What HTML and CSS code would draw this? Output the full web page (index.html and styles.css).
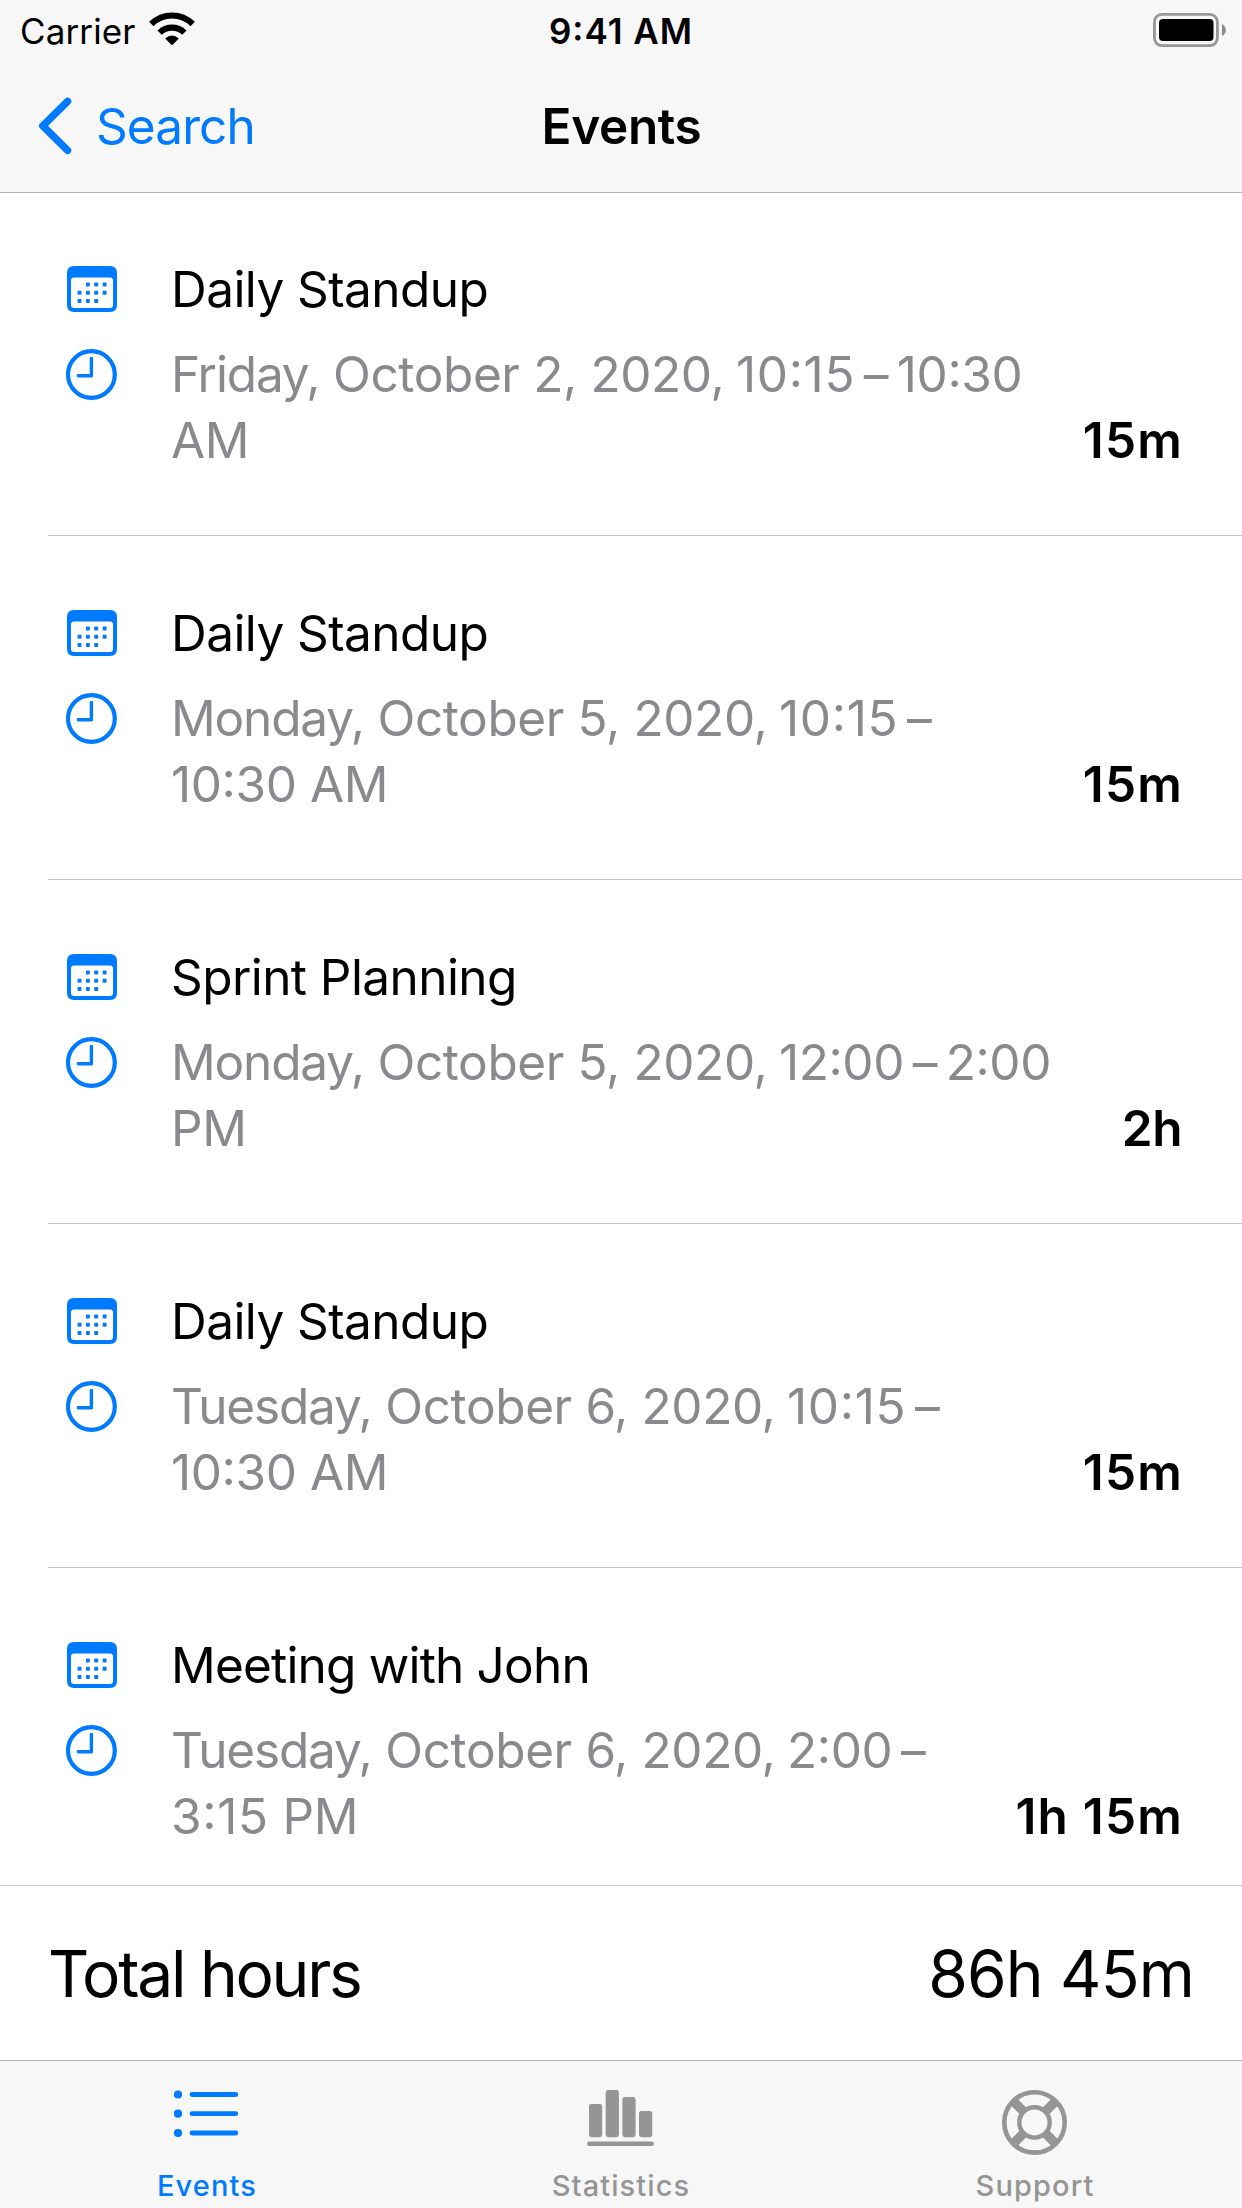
FILE: index.html
```html
<!DOCTYPE html>
<html lang="en">
<head>
<meta charset="utf-8">
<title>Events</title>
<link rel="stylesheet" href="styles.css">
</head>
<body>
<svg class="sprite" aria-hidden="true">
  <symbol id="calendar" viewBox="0 0 50 46">
    <path fill="currentColor" fill-rule="evenodd" d="M7 0H43Q50 0 50 7V39Q50 46 43 46H7Q0 46 0 39V7Q0 0 7 0ZM7 11.5Q4 11.5 4 14.5V39Q4 42 7 42H43Q46 42 46 39V14.5Q46 11.5 43 11.5Z"/>
    <g fill="currentColor">
      <rect x="18.9" y="16.6" width="4" height="4" rx="1"/><rect x="27.2" y="16.6" width="4" height="4" rx="1"/><rect x="35.6" y="16.6" width="4" height="4" rx="1"/>
      <rect x="10.5" y="24.8" width="4" height="4" rx="1"/><rect x="18.9" y="24.8" width="4" height="4" rx="1"/><rect x="27.2" y="24.8" width="4" height="4" rx="1"/><rect x="35.6" y="24.8" width="4" height="4" rx="1"/>
      <rect x="10.5" y="33" width="4" height="4" rx="1"/><rect x="18.9" y="33" width="4" height="4" rx="1"/><rect x="27.2" y="33" width="4" height="4" rx="1"/>
    </g>
  </symbol>
  <symbol id="clock" viewBox="0 0 52 52">
    <g fill="none" stroke="currentColor">
      <circle cx="26.4" cy="26.5" r="23.4" stroke-width="4.2"/>
      <path d="M13.3 27.7H26.4V10.5" stroke-width="3.4" stroke-linecap="round" stroke-linejoin="round"/>
    </g>
  </symbol>
</svg>
<div class="screen">
  <header class="header">
    <div class="status">
      <div class="carrier">Carrier
        <svg class="wifi" viewBox="0 0 46 34">
          <g fill="none" stroke="#000" stroke-width="6.2">
            <path d="M2.3 12A29.5 29.5 0 0 1 43.7 12"/>
            <path d="M10.6 20.6A17.8 17.8 0 0 1 35.4 20.6"/>
          </g>
          <path d="M16.2 26.6Q23 20.4 29.8 26.6L24 32.5Q23 33.4 22 32.5Z"/>
        </svg>
      </div>
      <div class="clock-time">9:41 AM</div>
      <svg class="battery" viewBox="0 0 74 34">
        <rect x="1.4" y="1.4" width="63" height="31.2" rx="7.5" fill="none" stroke="#979797" stroke-width="2.8"/>
        <rect x="6" y="6" width="54.5" height="22" rx="4" fill="#000"/>
        <path d="M69 11Q72.8 13 72.8 17T69 23Z" fill="#8b8b8b"/>
      </svg>
    </div>
    <nav class="nav">
      <a class="back">
        <svg class="chevron" viewBox="0 0 34 58"><path d="M29.6 4.3 4.8 28.8 29.6 53.3" fill="none" stroke="currentColor" stroke-width="7.4" stroke-linecap="round" stroke-linejoin="round"/></svg>
        <span>Search</span>
      </a>
      <h1 class="title">Events</h1>
    </nav>
  </header>
  <main class="list">
    <article class="event">
      <svg class="icon cal"><use href="#calendar"/></svg>
      <h2 class="name">Daily Standup</h2>
      <svg class="icon clk"><use href="#clock"/></svg>
      <div class="when"><span class="day">Friday,</span> October 2, 2020, <span class="time quarter">10:15</span>&thinsp;<span class="dash">–</span>&thinsp;10:30<br>AM</div>
      <div class="duration">15m</div>
    </article>
    <article class="event">
      <svg class="icon cal"><use href="#calendar"/></svg>
      <h2 class="name">Daily Standup</h2>
      <svg class="icon clk"><use href="#clock"/></svg>
      <div class="when"><span class="day">Monday,</span> October 5, 2020, <span class="time quarter">10:15</span>&thinsp;<span class="dash">–</span><br>10:30 AM</div>
      <div class="duration">15m</div>
    </article>
    <article class="event">
      <svg class="icon cal"><use href="#calendar"/></svg>
      <h2 class="name">Sprint Planning</h2>
      <svg class="icon clk"><use href="#clock"/></svg>
      <div class="when"><span class="day">Monday,</span> October 5, 2020, <span class="time">12:00</span>&thinsp;<span class="dash">–</span>&thinsp;2:00<br>PM</div>
      <div class="duration hours">2h</div>
    </article>
    <article class="event">
      <svg class="icon cal"><use href="#calendar"/></svg>
      <h2 class="name">Daily Standup</h2>
      <svg class="icon clk"><use href="#clock"/></svg>
      <div class="when"><span class="day">Tuesday,</span> October 6, 2020, <span class="time quarter">10:15</span>&thinsp;<span class="dash">–</span><br>10:30 AM</div>
      <div class="duration">15m</div>
    </article>
    <article class="event">
      <svg class="icon cal"><use href="#calendar"/></svg>
      <h2 class="name long">Meeting with John</h2>
      <svg class="icon clk"><use href="#clock"/></svg>
      <div class="when"><span class="day">Tuesday,</span> October 6, 2020, <span class="time">2:00</span>&thinsp;<span class="dash">–</span><br><span class="quarter">3:15</span> PM</div>
      <div class="duration">1h 15m</div>
    </article>
  </main>
  <section class="total">
    <span class="total-label">Total hours</span>
    <span class="total-value">86h 45m</span>
  </section>
  <footer class="tabs">
    <a class="tab active">
      <svg class="tab-icon" viewBox="0 0 70 66">
        <g fill="currentColor">
          <circle cx="6" cy="5.5" r="4.1"/><circle cx="6" cy="24.7" r="4.1"/><circle cx="6" cy="44" r="4.1"/>
          <rect x="17.6" y="3.1" width="48.6" height="4.8" rx="2.4"/><rect x="17.6" y="22.3" width="48.6" height="4.8" rx="2.4"/><rect x="17.6" y="41.6" width="48.6" height="4.8" rx="2.4"/>
        </g>
      </svg>
      <span>Events</span>
    </a>
    <a class="tab">
      <svg class="tab-icon" viewBox="0 0 70 66">
        <g fill="currentColor">
          <rect x="3" y="15" width="13.2" height="33.2" rx="2.4"/><rect x="19.7" y="1" width="13.2" height="47.2" rx="2.4"/><rect x="36.4" y="8" width="13.2" height="40.2" rx="2.4"/><rect x="53" y="22" width="13.2" height="26.2" rx="2.4"/>
          <rect x="1" y="52.6" width="67" height="4.4" rx="2.2"/>
        </g>
      </svg>
      <span>Statistics</span>
    </a>
    <a class="tab">
      <svg class="tab-icon" viewBox="0 0 70 66">
        <g fill="none" stroke="currentColor">
          <circle cx="34.5" cy="33.4" r="30.2" stroke-width="4.6"/>
          <circle cx="34.5" cy="33.4" r="15.2" stroke-width="4.4"/>
          <path d="M14 12.9 23.4 22.3M55 12.9 45.6 22.3M14 53.9 23.4 44.5M55 53.9 45.6 44.5" stroke-width="9.4"/>
        </g>
      </svg>
      <span>Support</span>
    </a>
  </footer>
</div>
</body>
</html>
```
FILE: styles.css
```css
* { box-sizing: border-box; }
body {
  margin: 0;
  background: #fff;
  color: #000;
  font-family: Inter, "Liberation Sans", sans-serif;
  font-feature-settings: "calt" 1;
}
h1, h2 { margin: 0; font: inherit; }
svg { display: block; }
.sprite { display: none; }
.screen {
  width: 1242px;
  height: 2208px;
  display: flex;
  flex-direction: column;
  overflow: hidden;
}

/* status and navigation bars */
.header {
  height: 193px;
  flex: none;
  background: #f7f7f7;
  border-bottom: 1px solid #b2b2b2;
}
.status {
  height: 60px;
  display: grid;
  grid-template-columns: 1fr auto 1fr;
  align-items: center;
  padding: 2px 20px 0;
  font-size: 35px;
  line-height: 58px;
}
.carrier { display: flex; align-items: center; gap: 13px; letter-spacing: .13px; }
.wifi { width: 46px; height: 34px; margin-top: -4px; fill: #000; }
.clock-time { font-weight: 600; letter-spacing: 1px; }
.battery { width: 74px; height: 34px; margin: -2px -5px 0 0; justify-self: end; }
.nav {
  height: 132px;
  display: grid;
  grid-template-columns: 1fr auto 1fr;
  align-items: center;
  padding: 0 37px 0 38px;
  font-size: 49.5px;
  line-height: 66px;
}
.back { display: flex; align-items: center; gap: 24px; color: #007aff; letter-spacing: -.9px; }
.chevron { width: 34px; height: 58px; }
.title { font-weight: 600; letter-spacing: -.36px; }

/* event rows */
.list { flex: 1; min-height: 0; overflow: hidden; }
.event {
  height: 344px;
  display: grid;
  grid-template-columns: 104px 1fr auto;
  grid-template-rows: 66px 132px;
  row-gap: 19px;
  margin-left: 48px;
  padding: 64px 59px 0 19px;
  border-bottom: 1px solid #c6c6c8;
  font-size: 49.5px;
  line-height: 66px;
  white-space: nowrap;
}
.event:first-child { height: 343px; padding-top: 63px; }
.event:last-child { border-bottom: 0; }
.icon { color: #007aff; }
.cal { width: 50px; height: 46px; margin-top: 10px; }
.clk { width: 52px; height: 52px; margin: 7px 0 0 -2px; }
.name { grid-column: 2 / 4; letter-spacing: -.57px; }
.name.long { letter-spacing: -.8px; }
.when { color: #8a8a8e; letter-spacing: -.38px; }
.day { letter-spacing: -1.15px; }
.time { margin-left: -2px; }
.quarter { letter-spacing: .7px; }
.dash { font-feature-settings: "calt" 0; }
.duration { align-self: end; font-weight: 600; letter-spacing: 1.2px; }
.hours { padding-right: 1px; letter-spacing: -.5px; }

/* summary */
.total {
  height: 175px;
  flex: none;
  display: flex;
  align-items: center;
  justify-content: space-between;
  padding: 2px 48px 0 48px;
  border-top: 1px solid #c6c6c8;
  font-size: 64px;
  line-height: 80px;
}
.total-label { letter-spacing: -2.25px; }
.total-value { letter-spacing: -.8px; }

/* tab bar */
.tabs {
  height: 148px;
  flex: none;
  display: grid;
  grid-template-columns: repeat(3, 1fr);
  background: #f7f7f7;
  border-top: 1px solid #b2b2b2;
  color: #959595;
  font-size: 29px;
  font-weight: 500;
  line-height: 36px;
  letter-spacing: 1.1px;
}
.tab { display: flex; flex-direction: column; align-items: center; gap: 13px; padding-top: 28px; }
.active { color: #007aff; }
.tab-icon { width: 70px; height: 66px; }
```
